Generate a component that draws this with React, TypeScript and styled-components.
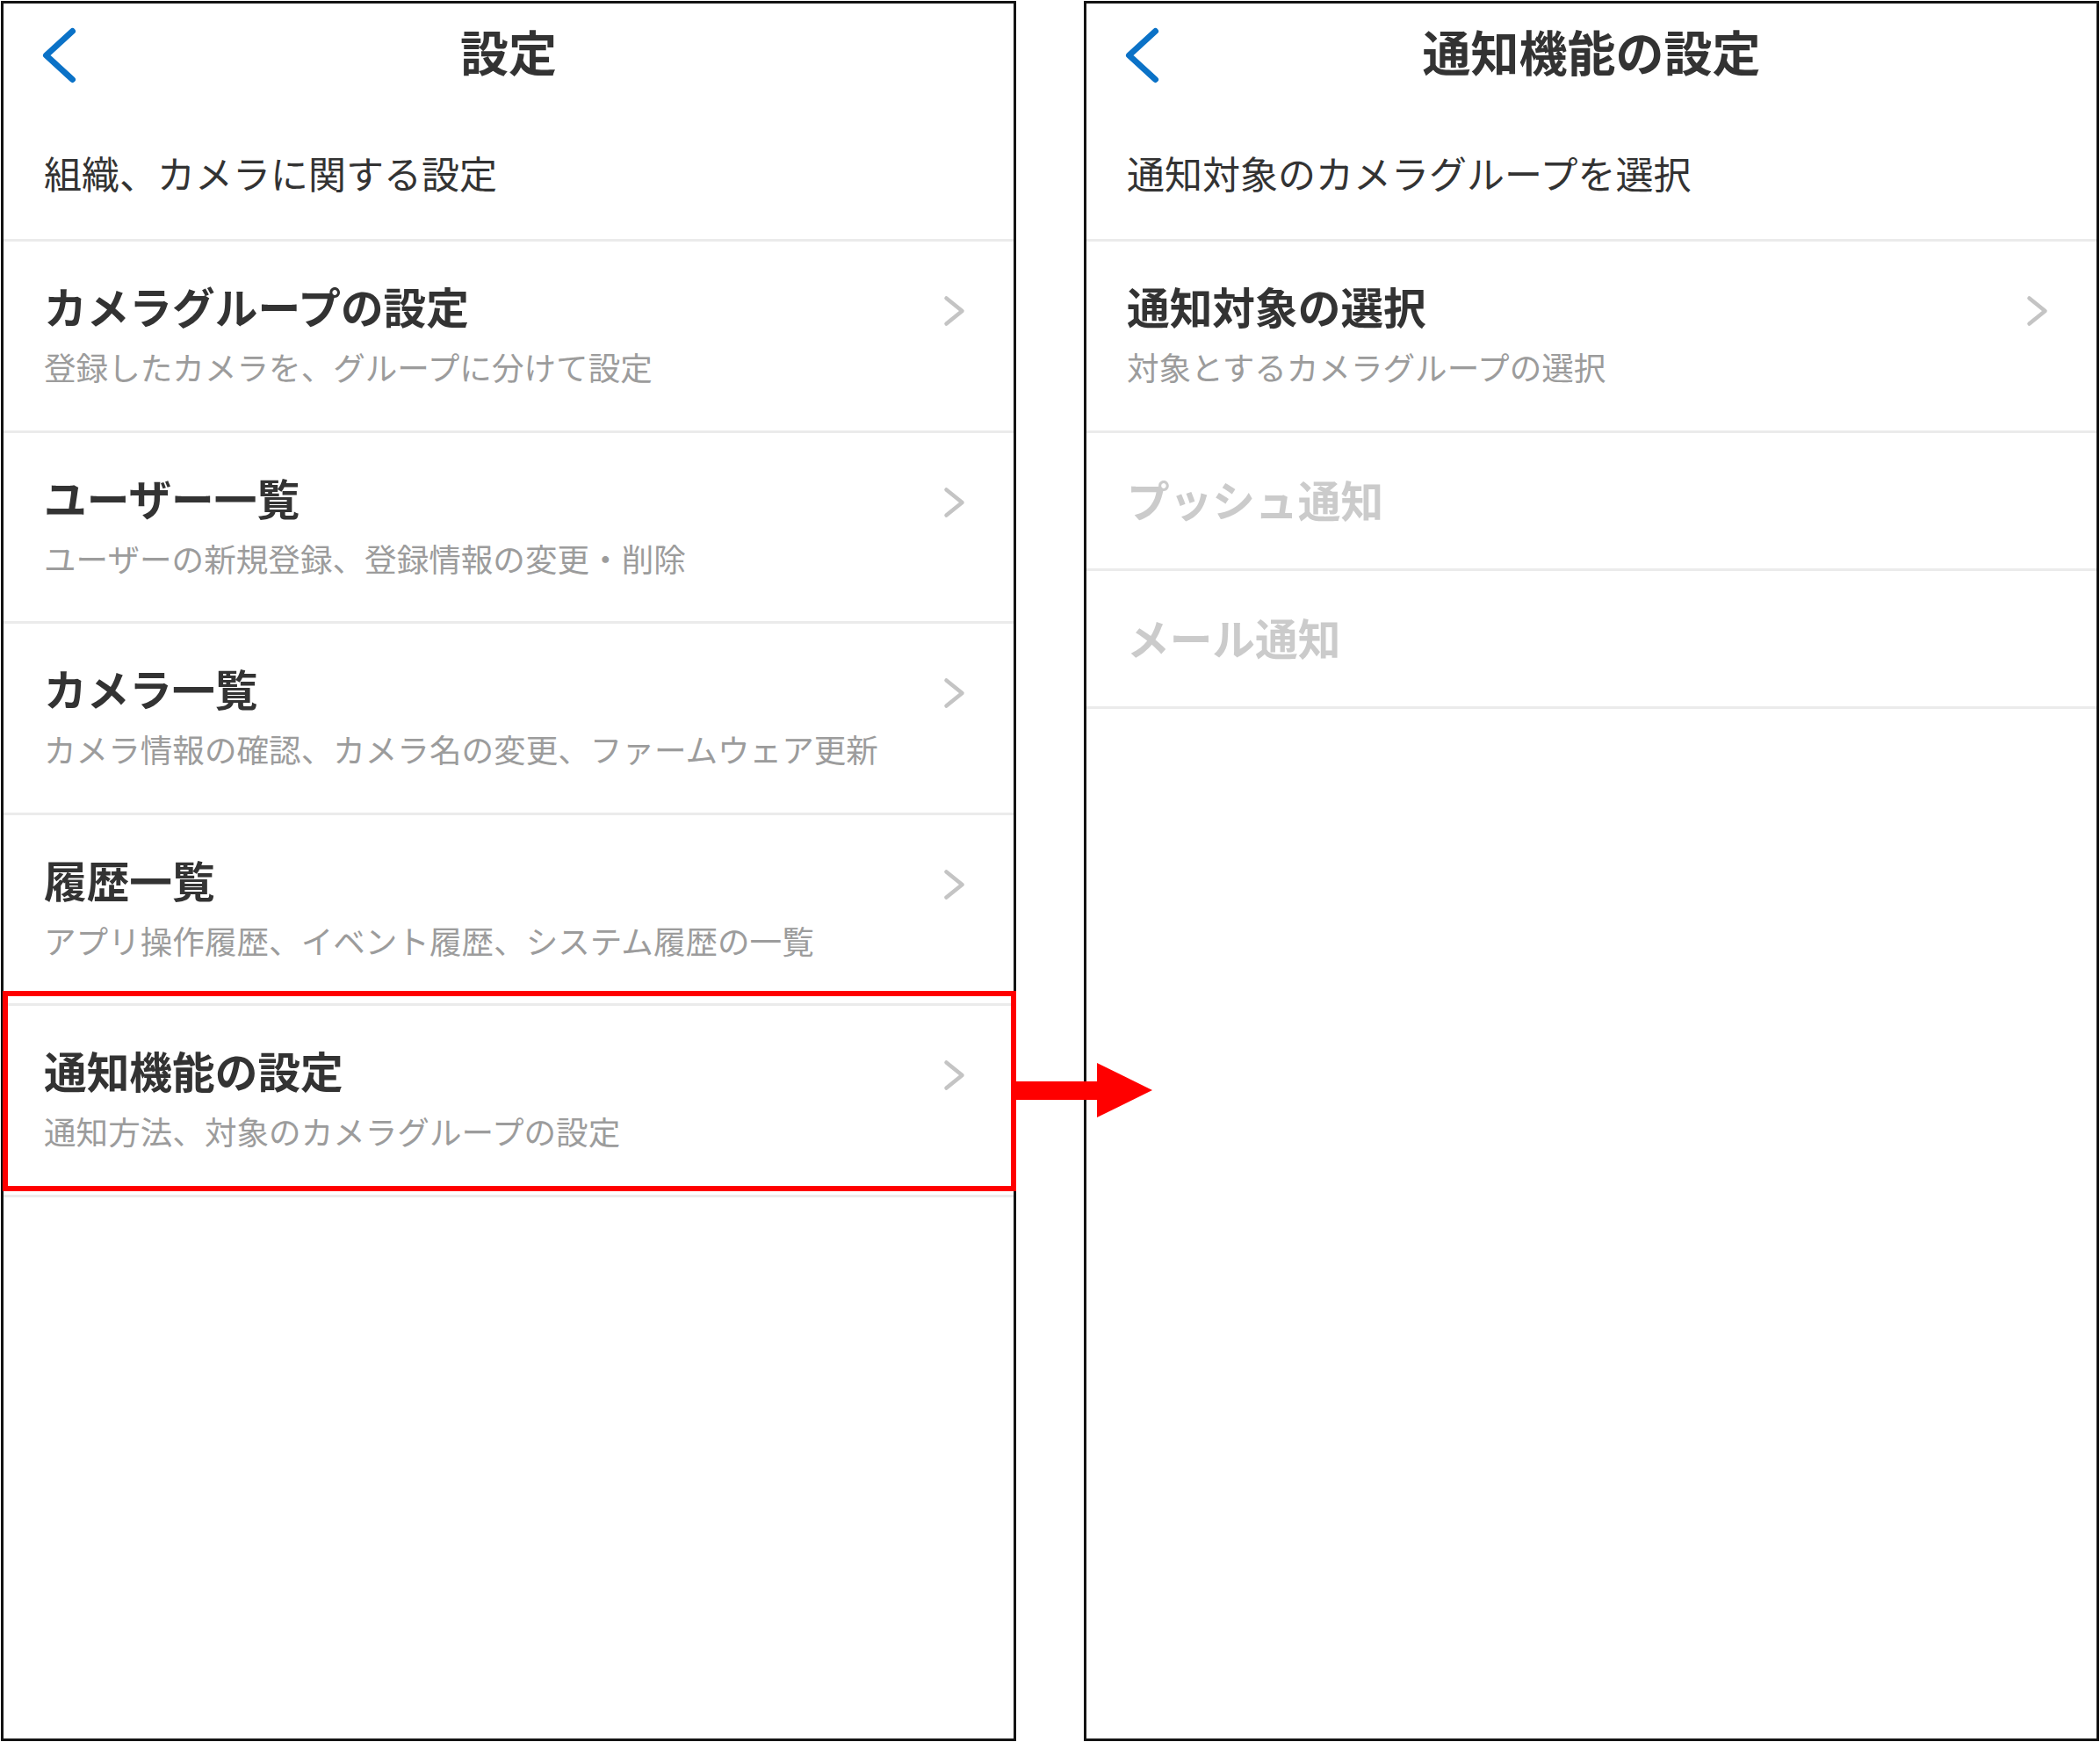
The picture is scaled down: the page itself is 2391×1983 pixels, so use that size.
import React from "react";
import styled, { createGlobalStyle } from "styled-components";

const GlobalStyle = createGlobalStyle`
  html, body {
    margin: 0;
    padding: 0;
    background: #ffffff;
  }
  body {
    font-family: "Noto Sans CJK JP", "Noto Sans", sans-serif;
  }
  *, *::before, *::after {
    box-sizing: border-box;
  }
`;

const Stage = styled.main`
  position: relative;
  display: flex;
  gap: 77px;
  padding: 1px;
  width: 2391px;
  height: 1983px;
  background: #ffffff;
`;

const Phone = styled.section`
  position: relative;
  width: 1156px;
  height: 1981px;
  flex: none;
  border: 3px solid #141414;
  background: #ffffff;
  display: flex;
  flex-direction: column;
`;

const NavBar = styled.header`
  flex: none;
  height: 106px;
  display: grid;
  grid-template-columns: 1fr auto 1fr;
  align-items: center;
`;

const BackButton = styled.button`
  justify-self: start;
  display: flex;
  margin: 12px 0 0 41px;
  padding: 0;
  border: 0;
  background: none;
  cursor: pointer;
`;

const NavTitle = styled.h1`
  margin: 0;
  font-size: 55px;
  line-height: 64px;
  font-weight: 700;
  color: #333333;
  white-space: nowrap;
`;

const SectionHeader = styled.div`
  flex: none;
  height: 165px;
  display: flex;
  align-items: center;
  padding: 10px 46px 0;
  border-bottom: 3px solid #ebebeb;
  font-size: 43px;
  line-height: 52px;
  color: #333333;
  white-space: nowrap;
`;

const List = styled.ul`
  margin: 0;
  padding: 0;
  list-style: none;
`;

const Row = styled.li<{ $compact?: boolean }>`
  position: relative;
  display: flex;
  align-items: flex-start;
  height: ${(p) => (p.$compact ? "157px" : "217.6px")};
  padding: ${(p) => (p.$compact ? "46px" : "44px")} 54px 0 46px;
  border-bottom: 3px solid #ebebeb;
`;

const RowText = styled.div`
  flex: 1;
  min-width: 0;
`;

const RowTitle = styled.div<{ $disabled?: boolean }>`
  font-size: 48.7px;
  line-height: 58px;
  font-weight: 700;
  color: ${(p) => (p.$disabled ? "#cbcbcb" : "#333333")};
  white-space: nowrap;
`;

const RowSubtitle = styled.div`
  margin-top: 19px;
  font-size: 36.6px;
  line-height: 44px;
  color: #9c9c9c;
  white-space: nowrap;
`;

const Disclosure = styled.svg`
  flex: none;
  margin-top: 16px;
`;

/* red annotation frame drawn over the highlighted row */
const Highlight = styled.div`
  position: absolute;
  top: -17px;
  left: -1px;
  right: -3px;
  height: 228px;
  border: 6px solid #ff0000;
  pointer-events: none;
`;

const FlowArrow = styled.svg`
  position: absolute;
  left: 1157px;
  top: 1210px;
  z-index: 2;
`;

const BackChevron = () => (
  <svg width="46" height="70" viewBox="0 0 46 70" aria-hidden="true">
    <path
      d="M37.5 7.5 L7.5 35 L37.5 62.5"
      fill="none"
      stroke="#0b72c7"
      strokeWidth="7"
      strokeLinecap="round"
      strokeLinejoin="round"
    />
  </svg>
);

const ChevronRight = () => (
  <Disclosure width="26" height="38" viewBox="0 0 26 38" aria-hidden="true">
    <path
      d="M3.5 4.5 L21.5 19 L3.5 33.5"
      fill="none"
      stroke="#c4c4c4"
      strokeWidth="4.5"
      strokeLinecap="round"
      strokeLinejoin="round"
    />
  </Disclosure>
);

type MenuItem = {
  title: string;
  subtitle?: string;
  disabled?: boolean;
  highlighted?: boolean;
};

const settingsItems: MenuItem[] = [
  { title: "カメラグループの設定", subtitle: "登録したカメラを、グループに分けて設定" },
  { title: "ユーザー一覧", subtitle: "ユーザーの新規登録、登録情報の変更・削除" },
  { title: "カメラ一覧", subtitle: "カメラ情報の確認、カメラ名の変更、ファームウェア更新" },
  { title: "履歴一覧", subtitle: "アプリ操作履歴、イベント履歴、システム履歴の一覧" },
  { title: "通知機能の設定", subtitle: "通知方法、対象のカメラグループの設定", highlighted: true },
];

const notificationItems: MenuItem[] = [
  { title: "通知対象の選択", subtitle: "対象とするカメラグループの選択" },
  { title: "プッシュ通知", disabled: true },
  { title: "メール通知", disabled: true },
];

const Screen = ({
  title,
  section,
  items,
}: {
  title: string;
  section: string;
  items: MenuItem[];
}) => (
  <Phone>
    <NavBar>
      <BackButton type="button" aria-label="戻る">
        <BackChevron />
      </BackButton>
      <NavTitle>{title}</NavTitle>
      <span />
    </NavBar>
    <SectionHeader>{section}</SectionHeader>
    <List>
      {items.map((item) => (
        <Row key={item.title} $compact={!item.subtitle}>
          <RowText>
            <RowTitle $disabled={item.disabled}>{item.title}</RowTitle>
            {item.subtitle && <RowSubtitle>{item.subtitle}</RowSubtitle>}
          </RowText>
          {!item.disabled && <ChevronRight />}
          {item.highlighted && <Highlight />}
        </Row>
      ))}
    </List>
  </Phone>
);

export default function App() {
  return (
    <>
      <GlobalStyle />
      <Stage>
        <Screen title="設定" section="組織、カメラに関する設定" items={settingsItems} />
        <Screen
          title="通知機能の設定"
          section="通知対象のカメラグループを選択"
          items={notificationItems}
        />
        <FlowArrow width="155" height="62" viewBox="0 0 155 62" aria-hidden="true">
          <rect x="0" y="21" width="93" height="21" fill="#ff0000" />
          <polygon points="92,0 155,31 92,62" fill="#ff0000" />
        </FlowArrow>
      </Stage>
    </>
  );
}
